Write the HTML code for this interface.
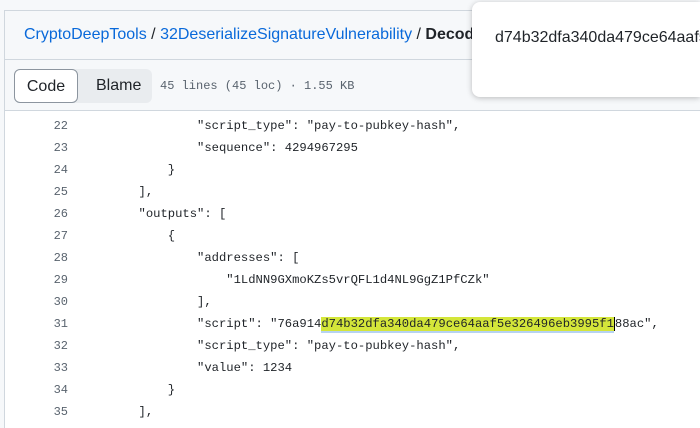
<!DOCTYPE html>
<html><head><style>
html,body{margin:0;width:700px;height:428px;overflow:hidden}
body{background:#f6f8fa;font-family:"Liberation Sans",sans-serif;position:relative}
.page{position:absolute;left:4px;top:10px;right:0;bottom:0;background:#fff;border-left:1px solid #d0d7de;border-top:1px solid #d0d7de}
.hdr{position:absolute;left:0;right:0;top:0;height:48px;background:#f6f8fa;border-bottom:1px solid #d0d7de}
.bc{position:absolute;left:19px;top:15px;font-size:16px;color:#1f2328;white-space:nowrap}
.bc a{color:#0969da}
.bar{position:absolute;left:0;right:0;top:49px;height:50px;background:#f6f8fa;border-bottom:1px solid #d0d7de}
.seg{position:absolute;background:#e9ecef;border-radius:6px}
.code{position:absolute;width:64px;height:34px;border:1px solid #8c959f;border-radius:6px;background:#fff;font-size:16px;line-height:34px;text-align:center;color:#1f2328;box-sizing:border-box}
.blame{position:absolute;font-size:16px;color:#1f2328}
.meta{position:absolute;left:160px;top:79px;font:12px "Liberation Mono",monospace;color:#59636e}
.lines{position:absolute;top:115px;left:0;font:12.2px/22px "Liberation Mono",monospace;color:#1f2328}
.ln{position:absolute;left:40px;width:28px;text-align:right;color:#59636e;font-size:12px}
.tx{position:absolute;left:80px;white-space:pre}
.hl{background:#d4e63a;box-shadow:0 2px 0 #b6d3f2}
.cur{border-left:1.5px solid #000}
.pop{position:absolute;left:472px;top:2px;width:228px;height:95px;background:#fff;border-radius:8px 0 0 8px;box-shadow:0 1px 6px rgba(0,0,0,.25);font-size:16px;color:#1f2328;overflow:hidden}
.pop span{position:absolute;left:23px;top:27px;white-space:nowrap}
</style></head><body>
<div class="page">
<div class="hdr"><div class="bc"><a>CryptoDeepTools</a> / <a>32DeserializeSignatureVulnerability</a> / <b style="font-weight:600">Decode</b></div></div>
<div class="bar"></div>
</div>
<div class="seg" style="left:14px;top:69px;height:34px;width:138px"></div>
<div class="code" style="left:14px;top:69px">Code</div>
<div class="blame" style="left:96px;top:77px">Blame</div>
<div class="meta">45 lines (45 loc) · 1.55 KB</div>
<div class="lines">
<div class="ln" style="top:0">22</div><div class="tx" style="top:0">                "script_type": "pay-to-pubkey-hash",</div>
<div class="ln" style="top:22px">23</div><div class="tx" style="top:22px">                "sequence": 4294967295</div>
<div class="ln" style="top:44px">24</div><div class="tx" style="top:44px">            }</div>
<div class="ln" style="top:66px">25</div><div class="tx" style="top:66px">        ],</div>
<div class="ln" style="top:88px">26</div><div class="tx" style="top:88px">        "outputs": [</div>
<div class="ln" style="top:110px">27</div><div class="tx" style="top:110px">            {</div>
<div class="ln" style="top:132px">28</div><div class="tx" style="top:132px">                "addresses": [</div>
<div class="ln" style="top:154px">29</div><div class="tx" style="top:154px">                    "1LdNN9GXmoKZs5vrQFL1d4NL9GgZ1PfCZk"</div>
<div class="ln" style="top:176px">30</div><div class="tx" style="top:176px">                ],</div>
<div class="ln" style="top:198px">31</div><div class="tx" style="top:198px">                "script": "76a914<span class="hl">d74b32dfa340da479ce64aaf5e326496eb3995f1</span><span class="cur"></span>88ac",</div>
<div class="ln" style="top:220px">32</div><div class="tx" style="top:220px">                "script_type": "pay-to-pubkey-hash",</div>
<div class="ln" style="top:242px">33</div><div class="tx" style="top:242px">                "value": 1234</div>
<div class="ln" style="top:264px">34</div><div class="tx" style="top:264px">            }</div>
<div class="ln" style="top:286px">35</div><div class="tx" style="top:286px">        ],</div>
</div>
<div class="pop"><span>d74b32dfa340da479ce64aaf5e326496eb3995f1</span></div>
</body></html>
